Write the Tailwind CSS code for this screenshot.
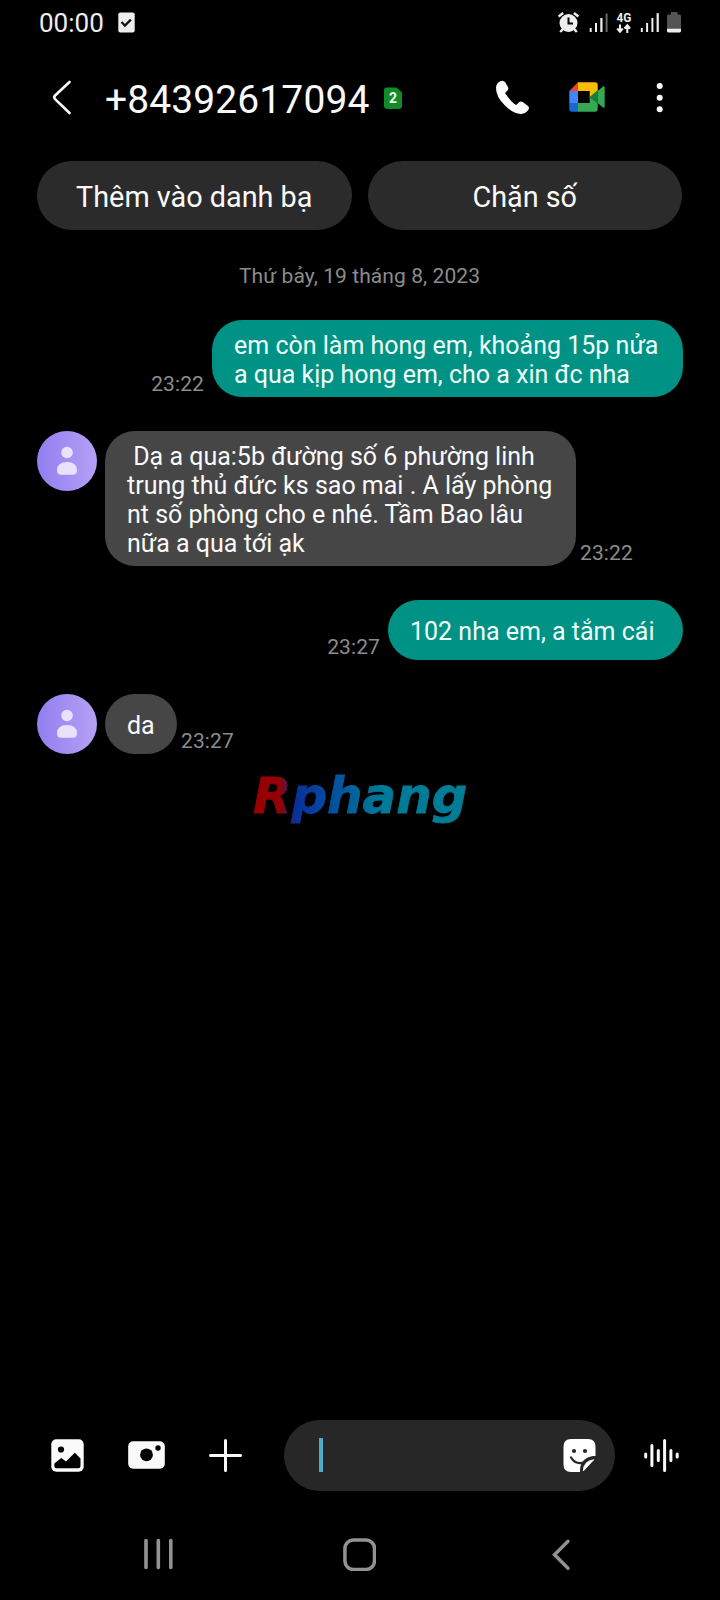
<!DOCTYPE html>
<html lang="vi">
<head>
<meta charset="utf-8">
<title>Tin nhắn</title>
<script src="https://cdn.jsdelivr.net/npm/@tailwindcss/browser@4"></script>
</head>
<body class="bg-black">
<div class="flex h-[1600px] w-[720px] flex-col overflow-hidden bg-black font-[Roboto,sans-serif] text-[#fafafa]">

  <!-- Status bar -->
  <div class="flex h-[46px] shrink-0 items-center pl-[39px] pr-[38px]">
    <span class="w-[67px] whitespace-nowrap text-[26px] leading-[46px] text-[#eeeeee]">00:00</span>
    <svg class="-mt-[2px] ml-[12px] block" width="17" height="21" viewBox="0 0 17 21"><rect x="0.3" y="0.5" width="16.4" height="20" rx="2" fill="#eee"/><path d="M3.5 10l3.4 3.6 6-6" fill="none" stroke="#111" stroke-width="2.2"/></svg>
    <svg class="ml-auto block" width="124" height="26" viewBox="558 10 124 26">
      <g fill="#eee">
        <circle cx="568.5" cy="23" r="9"/>
        <path d="M558.600 16.500l4.500-3.600M578.400 16.500l-4.500-3.600M563 29l-2.800 3M574 29l2.800 3" stroke="#eee" stroke-width="2.500" fill="none"/>
        <path d="M568.500 17.500v6h4.500" stroke="#000" stroke-width="2" fill="none"/>
        <rect x="589.700" y="28" width="2" height="4"/><rect x="595" y="23" width="2" height="9"/><rect x="600.300" y="18" width="2.200" height="14"/><rect x="605.600" y="13.500" width="2" height="18.500" fill="#666"/>
        <text x="616.500" y="21.800" font-family="Roboto" font-weight="700" font-size="12.500" textLength="14.800" lengthAdjust="spacingAndGlyphs">4G</text>
        <path d="M620 24.500v7M617.200 28.500l2.800 3.200 2.800-3.200M627.300 33v-7M624.500 28.500l2.800-3.200 2.800 3.200" stroke="#eee" stroke-width="2" fill="none"/>
        <rect x="640.800" y="28" width="2" height="4"/><rect x="646.100" y="23" width="2" height="9"/><rect x="651.400" y="18" width="2" height="14"/><rect x="656.600" y="13.200" width="2.200" height="18.800"/>
        <path d="M667 16q0-1.500 1.500-1.500h2.500V12h6.500v2.500h2q1.500 0 1.500 1.500v13H667z" fill="#545454"/>
        <path d="M667 28.800h14v2.300q0 1.300-1.300 1.300h-11.400q-1.300 0-1.300-1.300z"/>
      </g>
    </svg>
  </div>

  <!-- Conversation header -->
  <div class="flex h-[104px] shrink-0 items-center pl-[52px]">
    <svg class="block" width="20" height="36" viewBox="52 80 20 36"><path d="M69.500 82L55.100 95.500q-1.800 1.800 0 3.600L69.500 113" fill="none" stroke="#fafafa" stroke-width="2.600" stroke-linecap="round"/></svg>
    <span class="ml-[33px] w-[266px] whitespace-nowrap pt-[3px] text-[39px] leading-[44px] tracking-[0.1px]">+84392617094</span>
    <svg class="ml-[12px] block" width="20" height="24" viewBox="383 85 20 24"><path d="M386.500 86.500h10l5.500 5v13q0 3.500-3.500 3.500h-11q-3.500 0-3.500-3.500V89.500q0-3 2.500-3z" fill="#118a2c"/><text x="393" y="102" text-anchor="middle" font-family="Roboto" font-size="14" font-weight="700" fill="#eefbea">2</text></svg>
    <svg class="ml-[92px] block" width="36" height="36" viewBox="495 80 36 36"><path d="M500.800 81Q496 83 496 88Q496 96.500 504.500 105Q513 113.900 521 113.900Q526 113.900 528.700 109.300Q529.500 107.500 528 106L522.700 102Q520.500 100.800 518.700 102.500L516.200 105Q511.500 102.500 505 93L507.500 90.500Q508.800 89 508.200 87.400L505.200 82.200Q503.300 80 500.800 81z" fill="#fff"/></svg>
    <svg class="-mt-[2px] ml-[38px] block" width="37" height="31" viewBox="569 82 37 31">
      <path d="M569.300 91l8.700-8.700V91z" fill="#ea4335"/>
      <path d="M569.300 91h8.700v12h-8.700z" fill="#4285f4"/>
      <path d="M569.300 103h8.700v8.700h-6q-2.700 0-2.700-2.700z" fill="#1967d2"/>
      <path d="M578 82.300h17q2.700 0 2.700 2.700v6.500l-8 6V91H578z" fill="#fbbc04"/>
      <path d="M578 103h11.700v-6l8 6v6q0 2.700-2.700 2.700h-17z" fill="#34a853"/>
      <path d="M589.700 97l8-7v14z" fill="#188038"/>
      <path d="M597.700 91l5-4.300q2-1.200 2 1v18.600q0 2.200-2 1l-5-4.300z" fill="#34a853"/>
    </svg>
    <svg class="ml-[50px] block" width="8" height="32" viewBox="656 82 8 32"><g fill="#fafafa"><circle cx="659.700" cy="86" r="3"/><circle cx="659.700" cy="97.700" r="3"/><circle cx="659.700" cy="109.200" r="3"/></g></svg>
  </div>

  <!-- Quick actions -->
  <div class="mt-[11px] grid h-[69px] shrink-0 grid-cols-2 gap-4 pl-[37px] pr-[38px] text-center text-[28.800px] leading-[66px]">
    <div class="h-[69px] whitespace-nowrap rounded-full bg-[#2b2b2b] pt-[3px]">Thêm vào danh bạ</div>
    <div class="h-[69px] whitespace-nowrap rounded-full bg-[#2b2b2b] pt-[3px]">Chặn số</div>
  </div>

  <!-- Messages -->
  <div class="flex grow flex-col pl-[37px] pr-[37px] text-[25px] leading-[29px]">
    <div class="mt-[31px] h-[30px] pr-[1px] text-center text-[21px] leading-[30px] tracking-[0.080px] text-[#8c8c8c]">Thứ bảy, 19 tháng 8, 2023</div>

    <div class="mt-[29px] flex items-end justify-end">
      <span class="mr-[8px] text-[21px] leading-[26px] tracking-[0.1px] text-[#8c8c8c]">23:22</span>
      <div class="h-[77px] w-[471px] whitespace-nowrap rounded-[30px] bg-[#009284] pl-[22px] pt-[11px] text-[#effffb]">em còn làm hong em, khoảng 15p nửa<br>a qua kịp hong em, cho a xin đc nha</div>
    </div>

    <div class="mt-[34px] flex items-end">
      <svg class="mr-[8px] block self-start" width="60" height="60" viewBox="0 0 60 60"><defs><linearGradient id="av"><stop offset="0" stop-color="#917ef0"/><stop offset="1" stop-color="#b5a1f5"/></linearGradient></defs><circle cx="30" cy="30" r="30" fill="url(#av)"/><g fill="#e8e2fc"><circle cx="30" cy="21.500" r="5.800"/><path d="M20 39.500q0-8.500 10-8.500t10 8.500q0 4.200-4.500 4.200h-11q-4.500 0-4.500-4.200z"/></g></svg>
      <div class="h-[135px] w-[471px] whitespace-pre rounded-[30px] bg-[#464646] pl-[22px] pt-[11px]"> Dạ a qua:5b đường số 6 phường linh
trung thủ đức ks sao mai . A lấy phòng
nt số phòng cho e nhé. Tầm Bao lâu
nữa a qua tới ạk</div>
      <span class="ml-[4px] text-[21px] leading-[26px] tracking-[0.1px] text-[#8c8c8c]">23:22</span>
    </div>

    <div class="mt-[34px] flex items-end justify-end">
      <span class="mr-[8px] text-[21px] leading-[26px] tracking-[0.1px] text-[#8c8c8c]">23:27</span>
      <div class="h-[60px] w-[295px] whitespace-nowrap rounded-[30px] bg-[#009284] pl-[22px] pt-[17px] text-[#effffb]">102 nha em, a tắm cái</div>
    </div>

    <div class="mt-[34px] flex items-end">
      <svg class="mr-[8px] block" width="60" height="60" viewBox="0 0 60 60"><circle cx="30" cy="30" r="30" fill="url(#av)"/><g fill="#e8e2fc"><circle cx="30" cy="21.500" r="5.800"/><path d="M20 39.500q0-8.500 10-8.500t10 8.500q0 4.200-4.500 4.200h-11q-4.500 0-4.500-4.200z"/></g></svg>
      <div class="h-[60px] w-[72px] rounded-[30px] bg-[#464646] pl-[22px] pt-[17px]">da</div>
      <span class="ml-[4px] text-[21px] leading-[26px] tracking-[0.1px] text-[#8c8c8c]">23:27</span>
    </div>

    <!-- Watermark -->
    <svg class="ml-[203px] mt-[2px] block overflow-visible" width="242" height="86" viewBox="240 756 242 86">
      <defs><linearGradient id="wm" gradientUnits="userSpaceOnUse" x1="252" y1="0" x2="468" y2="0"><stop offset="0" stop-color="#980000"/><stop offset=".13" stop-color="#940006"/><stop offset=".2" stop-color="#08309a"/><stop offset=".32" stop-color="#0646a0"/><stop offset=".6" stop-color="#007a98"/><stop offset="1" stop-color="#007d96"/></linearGradient></defs>
      <text x="253" y="813" font-family="DejaVu Sans" font-size="50.500" font-weight="700" font-style="italic" textLength="214.500" lengthAdjust="spacingAndGlyphs" fill="url(#wm)" stroke="url(#wm)" stroke-width="0.800">Rphang</text>
    </svg>
  </div>

  <!-- Composer -->
  <div class="flex h-[71px] shrink-0 items-center pl-[51px]">
    <svg class="block" width="33" height="33" viewBox="0 0 33 33"><rect x="0.300" y="0.300" width="32.400" height="32.400" rx="5" fill="#fafafa"/><circle cx="10" cy="10.500" r="3.100" fill="#000"/><path d="M3.300 24.500l7-5.500 4.700 3.500 8.800-8.700 5.700 5.800v7.400q0 2.300-2.300 2.300H5.600q-2.300 0-2.300-2.300z" fill="#000"/></svg>
    <svg class="-mt-[1px] ml-[44px] block" width="37" height="28" viewBox="0 0 37 28"><rect x="0.200" y="0.300" width="36.600" height="27.400" rx="5" fill="#fafafa"/><circle cx="18.500" cy="13.800" r="6.400" fill="#000"/><circle cx="30" cy="7" r="2.700" fill="#000"/></svg>
    <svg class="ml-[44px] block" width="33" height="33" viewBox="0 0 33 33"><path d="M16.500 1.500v30M1.500 16.500h30" stroke="#fafafa" stroke-width="3" stroke-linecap="round"/></svg>
    <div class="ml-[42px] flex h-[71px] w-[331px] items-center rounded-full bg-[#272727] pl-[35px]">
      <span class="-mt-[2px] block h-[34px] w-[4px] bg-[#4fabcb]"></span>
      <svg class="ml-[240px] block" width="33" height="33" viewBox="563 1439 33 33"><path d="M571 1439h17q7.500 0 7.500 7.500v9.500q-14 0-15.500 16h-9q-7.500 0-7.500-7.500v-18q0-7.500 7.500-7.500z" fill="#fff"/><circle cx="574" cy="1451" r="2.100" fill="#272727"/><circle cx="585" cy="1451" r="2.100" fill="#272727"/><path d="M571 1457.500q3.500 5.700 9 5.700q1.500 0 3-.7M581.200 1474v-3q0-13.500 16-13.800" fill="none" stroke="#272727" stroke-width="2.300" stroke-linecap="round"/><path d="M583.300 1471q.2-10 10.500-11.300z" fill="#fff" stroke="#fff" stroke-width="0.800" stroke-linejoin="round"/></svg>
    </div>
    <svg class="-mt-[1px] ml-[28px] block" width="38" height="36" viewBox="643 1437 38 36"><g stroke="#fafafa" stroke-width="3" stroke-linecap="round"><path d="M645.700 1454v3M651.900 1445.500v20M658.300 1450.500v10M664.600 1440.500v30M670.900 1450.500v10M677.200 1454v3"/></g></svg>
  </div>

  <!-- Navigation bar -->
  <div class="flex h-[109px] shrink-0 items-start pl-[143px] pt-[46px]">
    <svg class="block" width="31" height="33" viewBox="143 1538 31 33"><path d="M146 1541.500v27M158.300 1541.500v27M170.800 1541.500v27" stroke="#929292" stroke-width="3.600" stroke-linecap="round"/></svg>
    <svg class="ml-[168px] block" width="34" height="34" viewBox="0 0 34 34"><rect x="2.900" y="2.900" width="29.600" height="29.600" rx="8.500" fill="none" stroke="#929292" stroke-width="3.500"/></svg>
    <svg class="ml-[175px] block" width="20" height="34" viewBox="551 1537 20 34"><path d="M568 1541.300L554.500 1554.800L568 1568.300" fill="none" stroke="#929292" stroke-width="3.400" stroke-linecap="round"/></svg>
  </div>
</div>
</body>
</html>
